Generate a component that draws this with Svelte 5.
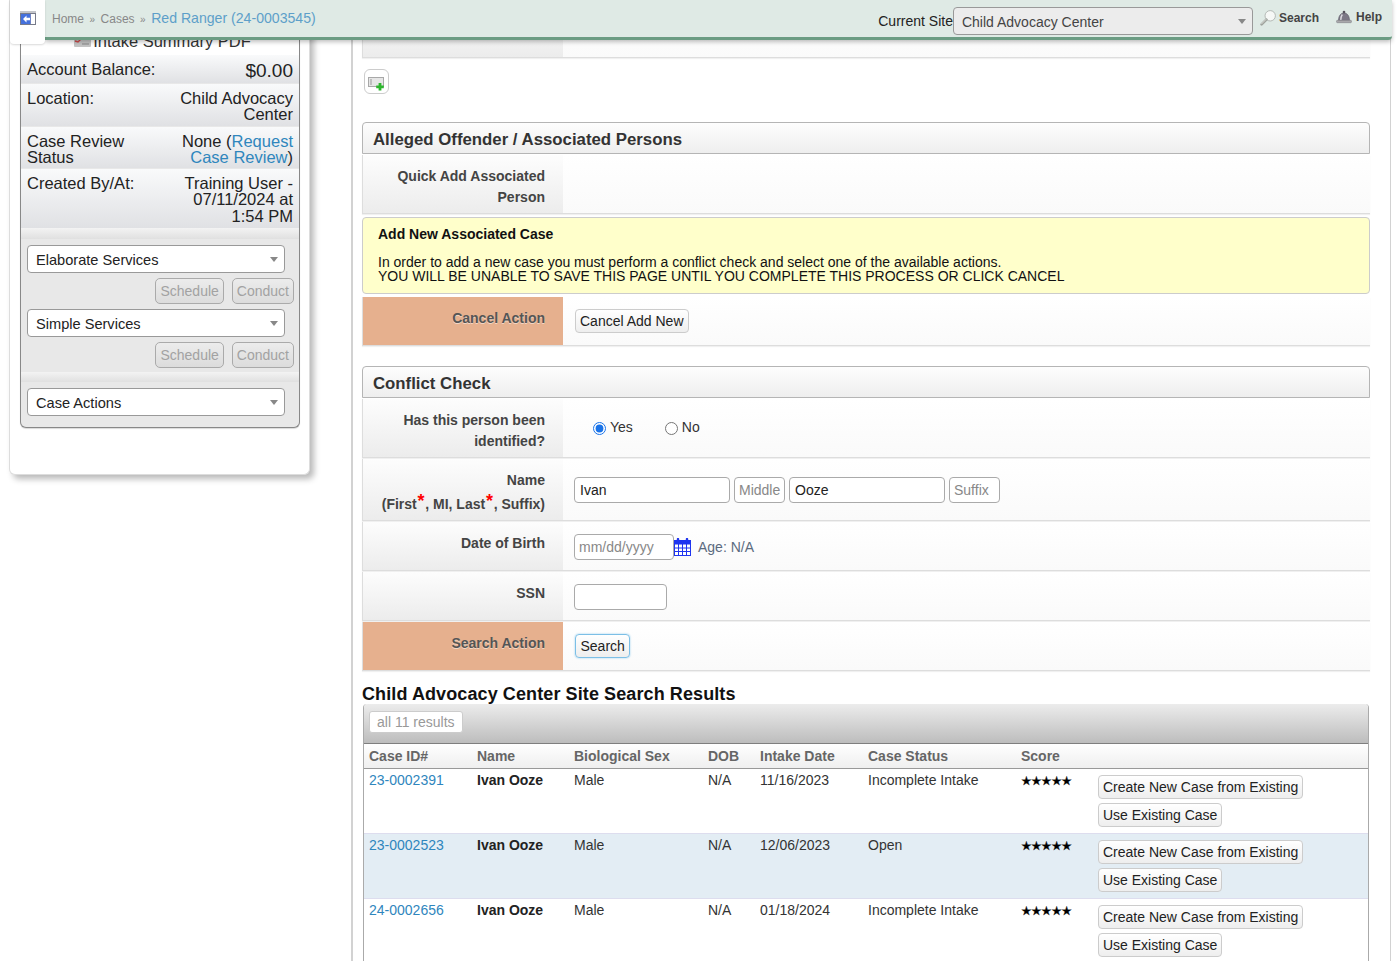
<script>
  const results = [
    { id: '23-0002391', date: '11/16/2023', status: 'Incomplete Intake', alt: false },
    { id: '23-0002523', date: '12/06/2023', status: 'Open', alt: true },
    { id: '24-0002656', date: '01/18/2024', status: 'Incomplete Intake', alt: false }
  ];
  const cols = ['Case ID#', 'Name', 'Biological Sex', 'DOB', 'Intake Date', 'Case Status', 'Score', ''];
</script>

<div class="page">
  <header class="topbar">
    <div class="tab">
      <svg class="backicon" width="16" height="14" viewBox="0 0 16 14">
        <rect x="0" y="0" width="16" height="14" fill="#c4c6cb" />
        <rect x="0.5" y="2.5" width="15" height="11" fill="#fff" stroke="#777b8a" />
        <rect x="1" y="3" width="9" height="10" fill="#4470dc" />
        <path d="M3 8 L6.5 4.6 V6.8 H10.5 V9.2 H6.5 V11.4 Z" fill="#fff" />
        <path d="M10.5 3 V13" stroke="#6e84c8" />
      </svg>
    </div>
    <nav class="crumbs">
      <span>Home</span><i>»</i><span>Cases</span><i>»</i><a href="#top">Red Ranger (24-0003545)</a>
    </nav>
    <div class="tools">
      <span class="sitelabel">Current Site</span>
      <div class="selectwrap site">
        <select><option>Child Advocacy Center</option></select>
      </div>
      <span class="tool searchtool">
        <svg width="16" height="16" viewBox="0 0 16 16">
          <circle cx="10.2" cy="5.8" r="5.2" fill="#f6f8f6" stroke="#b4bab6" />
          <path d="M6.4 9.6 L1.6 14.4" stroke="#9fa39d" stroke-width="2.6" stroke-linecap="round" />
          <path d="M6 9.4 L1.6 13.8" stroke="#e8e8e4" stroke-width="0.8" stroke-linecap="round" />
        </svg>
        Search
      </span>
      <span class="tool helptool">
        <svg width="16" height="14" viewBox="0 0 16 14">
          <path d="M2.5 10.5 C2.5 5.5 5 3 8 3 C11 3 13.5 5.5 13.5 10.5 Z" fill="#7c7886" stroke="#5b5864" stroke-width="0.6" />
          <path d="M6.3 4.5 C5.2 6 4.8 8 4.8 10" stroke="#dcdbe0" stroke-width="1.4" fill="none" />
          <circle cx="8" cy="2" r="1.3" fill="#55525c" />
          <rect x="0.5" y="10.3" width="15" height="2.4" rx="1" fill="#a9a8ab" stroke="#77757c" stroke-width="0.5" />
        </svg>
        Help
      </span>
    </div>
  </header>

  <aside class="side">
    <div class="card">
      <div class="panel">
        <div class="pdfrow">
          <svg width="17" height="10" viewBox="0 0 17 10">
            <rect width="17" height="10" rx="1" fill="#c4c4c4" />
            <path d="M1 4 L4 5 L8 1" stroke="#d04a4a" stroke-width="1.4" fill="none" />
            <path d="M8 7 H15" stroke="#888" />
          </svg>
          <span>Intake Summary PDF</span>
        </div>
        <div class="info bal"><span>Account Balance:</span><b>$0.00</b></div>
        <div class="info loc"><span>Location:</span><b>Child Advocacy Center</b></div>
        <div class="info rev">
          <span>Case Review Status</span>
          <b>None (<a href="#top">Request Case Review</a>)</b>
        </div>
        <div class="info cre">
          <span>Created By/At:</span>
          <b>Training User - 07/11/2024 at 1:54 PM</b>
        </div>
        <div class="divider first"></div>
        <div class="services">
          <div class="selectwrap svc"><select><option>Elaborate Services</option></select></div>
          <div class="acts"><button disabled>Schedule</button><button disabled>Conduct</button></div>
          <div class="selectwrap svc"><select><option>Simple Services</option></select></div>
          <div class="acts"><button disabled>Schedule</button><button disabled>Conduct</button></div>
        </div>
        <div class="divider"></div>
        <div class="services last">
          <div class="selectwrap svc"><select><option>Case Actions</option></select></div>
        </div>
      </div>
    </div>
  </aside>

  <main class="main">
    <div class="row toprow"><div class="lab"></div><div class="val"></div></div>
    <button class="addbtn" aria-label="Add">
      <svg width="17" height="14" viewBox="0 0 17 14">
        <rect x="0.5" y="0.5" width="15" height="9" fill="#e6e6e6" stroke="#a8a8a8" />
        <path d="M2 3 H4 M2 5 H4 M2 7 H4" stroke="#999" />
        <path d="M12 6 V13.5 M8.2 9.8 H15.8" stroke="#2db52d" stroke-width="2.8" />
      </svg>
    </button>

    <h2 class="sechead first">Alleged Offender / Associated Persons</h2>
    <div class="row quick"><div class="lab">Quick Add Associated Person</div><div class="val"></div></div>

    <div class="notice">
      <strong>Add New Associated Case</strong>
      <p>In order to add a new case you must perform a conflict check and select one of the available actions.<br />YOU WILL BE UNABLE TO SAVE THIS PAGE UNTIL YOU COMPLETE THIS PROCESS OR CLICK CANCEL</p>
    </div>

    <div class="row action cancel">
      <div class="lab">Cancel Action</div>
      <div class="val"><button class="btn">Cancel Add New</button></div>
    </div>

    <h2 class="sechead second">Conflict Check</h2>
    <div class="rows">
      <div class="row r-id">
        <div class="lab">Has this person been identified?</div>
        <div class="val radios">
          <label><input type="radio" name="ident" checked />Yes</label>
          <label><input type="radio" name="ident" />No</label>
        </div>
      </div>
      <div class="row r-name">
        <div class="lab">Name<br />(First<em>*</em>, MI, Last<em>*</em>, Suffix)</div>
        <div class="val names">
          <input class="wide" value="Ivan" />
          <input class="small" placeholder="Middle" />
          <input class="wide" value="Ooze" />
          <input class="small" placeholder="Suffix" />
        </div>
      </div>
      <div class="row r-dob">
        <div class="lab">Date of Birth</div>
        <div class="val dob">
          <input class="date" placeholder="mm/dd/yyyy" />
          <svg width="17" height="18" viewBox="0 0 17 18">
            <rect x="0.5" y="2.5" width="16" height="15" fill="#fff" stroke="#1f35f0" />
            <rect x="0.5" y="2.5" width="16" height="4" fill="#1f35f0" />
            <path d="M4 1 V4 M13 1 V4" stroke="#1f35f0" stroke-width="2.4" stroke-linecap="round" />
            <path d="M4.5 6 V17 M8.5 6 V17 M12.5 6 V17 M1 10 H16 M1 13.5 H16" stroke="#1f35f0" stroke-width="1" />
          </svg>
          <span class="age">Age: N/A</span>
        </div>
      </div>
      <div class="row r-ssn">
        <div class="lab">SSN</div>
        <div class="val"><input class="ssn" /></div>
      </div>
      <div class="row action r-search">
        <div class="lab">Search Action</div>
        <div class="val"><button class="btn focus">Search</button></div>
      </div>
    </div>

    <h3 class="reshead">Child Advocacy Center Site Search Results</h3>
    <div class="results">
      <div class="toolbar"><span class="count">all 11 results</span></div>
      <table>
        <thead>
          <tr>{#each cols as c}<th>{c}</th>{/each}</tr>
        </thead>
        <tbody>
          {#each results as r}
            <tr class:alt={r.alt}>
              <td><a href="#top">{r.id}</a></td>
              <td><b>Ivan Ooze</b></td>
              <td>Male</td>
              <td>N/A</td>
              <td>{r.date}</td>
              <td>{r.status}</td>
              <td class="stars"><span>★★★★★</span></td>
              <td class="btns">
                <button class="btn">Create New Case from Existing</button>
                <button class="btn">Use Existing Case</button>
              </td>
            </tr>
          {/each}
        </tbody>
      </table>
    </div>
  </main>
</div>

<style>
  :global(body) {
    margin: 0;
    background: #fff;
    overflow: hidden;
  }
  .page {
    position: relative;
    display: flex;
    width: 1399px;
    height: 961px;
    overflow: hidden;
    background: #fff;
    font-family: "Liberation Sans", Arial, sans-serif;
    font-size: 14px;
    color: #222;
  }
  a { color: #2f86bd; text-decoration: none; }

  /* header */
  .topbar {
    position: absolute;
    z-index: 5;
    top: 0;
    left: 45px;
    width: 1347px;
    height: 37px;
    display: flex;
    justify-content: space-between;
    background: #dfeae5;
    border-bottom: 3px solid #6b9c83;
    border-bottom-right-radius: 4px;
    box-shadow: 0 2px 4px rgba(0, 0, 0, .25);
  }
  .tab {
    position: absolute;
    left: -35px;
    top: 0;
    width: 35px;
    height: 44px;
    box-sizing: border-box;
    padding: 11px 0 0 10px;
    background: #fff;
    border-bottom-left-radius: 4px;
    border-bottom-right-radius: 4px;
    box-shadow: 0 1px 2px rgba(0, 0, 0, .15);
  }
  .backicon { display: block; }
  .crumbs {
    display: flex;
    align-items: baseline;
    padding: 10px 0 0 7px;
    font-size: 12px;
    color: #888;
  }
  .crumbs i { font-style: normal; font-size: 10px; margin: 0 5.5px; }
  .crumbs a { font-size: 14.1px; color: #5d9fc9; }
  .tools { display: flex; align-items: flex-start; padding: 7px 0 0; }
  .sitelabel { font-size: 14px; color: #222; padding-top: 6px; }
  .tool {
    display: flex;
    align-items: center;
    gap: 3px;
    font-size: 12px;
    font-weight: bold;
    color: #444;
    padding-top: 3px;
  }
  .searchtool { margin-left: 7px; }
  .helptool { margin: 0 10px 0 17px; gap: 4px; }

  /* selects */
  .selectwrap { position: relative; }
  .selectwrap::after {
    content: "";
    position: absolute;
    right: 7px;
    top: 50%;
    margin-top: -2px;
    border: 4px solid transparent;
    border-top: 5px solid #888;
    border-bottom: 0;
  }
  select {
    appearance: none;
    display: block;
    width: 100%;
    height: 28px;
    box-sizing: border-box;
    padding: 1px 8px 0;
    border: 1px solid #999;
    border-radius: 4px;
    background: #fff;
    font: 14px "Liberation Sans", Arial, sans-serif;
    color: #222;
  }
  .site { width: 300px; }
  .site select { background: #ececec; padding-top: 2px; color: #444; }

  /* sidebar */
  .side { width: 351px; flex: none; padding-left: 9px; box-sizing: border-box; }
  .card {
    width: 301px;
    height: 475px;
    box-sizing: border-box;
    padding: 0 10px;
    background: #fff;
    border-bottom-left-radius: 6px;
    border-bottom-right-radius: 6px;
    border: 1px solid #ddd;
    border-top: 0;
    box-shadow: 4px 4px 6px rgba(0, 0, 0, .28);
  }
  .panel {
    width: 280px;
    height: 428px;
    box-sizing: border-box;
    border: 1px solid #888;
    border-top: 0;
    border-radius: 0 0 6px 6px;
    background: #e8e8e8;
    display: flex;
    flex-direction: column;
    overflow: hidden;
    box-shadow: 0 1px 1px rgba(0,0,0,.15);
  }
  .pdfrow {
    display: flex;
    justify-content: center;
    align-items: baseline;
    gap: 2px;
    height: 55px;
    flex: none;
    box-sizing: border-box;
    padding: 33px 0 0 5px;
    background: #fff;
    font-size: 16.5px;
    line-height: 17px;
    color: #333;
  }
  .info {
    display: flex;
    justify-content: space-between;
    flex: none;
    box-sizing: border-box;
    padding: 6px 6px 0;
    margin-bottom: 1px;
    background: linear-gradient(#f9fafb, #e0e1e4);
    font-size: 16.5px;
    line-height: 16.4px;
    color: #222;
  }
  .info span { width: 118px; flex: none; }
  .info b { font-weight: normal; text-align: right; width: 116px; flex: none; }
  .bal { height: 28px; }
  .bal span { width: 170px; white-space: nowrap; }
  .bal b { font-size: 19px; line-height: 19px; width: auto; }
  .loc { height: 42px; }
  .rev { height: 41px; }
  .cre { height: 59px; margin-bottom: 0; }
  .divider {
    height: 10px;
    flex: none;
    background: linear-gradient(#f3f3f3, #e0e0e0);
  }
  .divider.first { height: 11px; }
  .services {
    flex: none;
    padding: 6px 6px 0;
    box-sizing: border-box;
    height: 133px;
  }
  .services.last { height: auto; }
  .svc { width: 258px; }
  .svc select { font-size: 14.6px; }
  .acts {
    display: flex;
    justify-content: flex-end;
    gap: 8px;
    height: 36px;
    padding-top: 5px;
    margin-right: -1px;
    box-sizing: border-box;
  }
  .acts button {
    height: 26px;
    padding: 0 4px;
    border: 1px solid #aaa;
    border-radius: 5px;
    background: linear-gradient(#ececec, #dcdcdc);
    font: 14px "Liberation Sans", Arial, sans-serif;
    color: #a2a2a2;
  }

  /* main */
  .main {
    width: 1040px;
    height: 961px;
    flex: none;
    box-sizing: border-box;
    padding: 0 19px 0 9px;
    border-left: 2px solid #d2d2d2;
    border-right: 1px solid #d2d2d2;
    background: #fff;
    overflow: hidden;
  }
  .row {
    display: grid;
    grid-template-columns: 200px 1fr;
    width: 1008px;
    box-sizing: border-box;
    border-left: 1px solid #ddd;
    border-bottom: 1px solid #ddd;
    box-shadow: 0 1px 1px rgba(0, 0, 0, .06);
  }
  .lab {
    box-sizing: border-box;
    padding: 11px 18px 0 10px;
    background: linear-gradient(#fdfdfd, #ececec);
    text-align: right;
    font-weight: bold;
    font-size: 14px;
    line-height: 21px;
    color: #444;
  }
  .val {
    box-sizing: border-box;
    padding-left: 11px;
    background: linear-gradient(#fff, #fafafa);
  }
  .toprow { height: 58px; }
  .addbtn {
    display: block;
    width: 25px;
    height: 25px;
    margin: 11px 0 28px 2px;
    padding: 5px 0 0 3px;
    border: 1px solid #ccc;
    border-radius: 6px;
    background: #fff;
  }
  .addbtn svg { display: block; }
  .sechead {
    width: 1008px;
    height: 32px;
    box-sizing: border-box;
    margin: 0;
    padding: 0 10px;
    border: 1px solid #b5b5b5;
    border-radius: 4px 4px 0 0;
    background: linear-gradient(#fdfdfd, #eeeeee);
    font-size: 16.8px;
    line-height: 34px;
    font-weight: bold;
    color: #333;
  }
  .quick { height: 59px; margin-top: 1px; }
  .notice {
    box-sizing: border-box;
    width: 1008px;
    height: 77px;
    margin-top: 3px;
    padding: 8px 15px 0;
    background: #ffffcb;
    border: 1px solid #ccc;
    border-radius: 4px;
    line-height: 14px;
    color: #111;
  }
  .notice strong { display: block; line-height: 16px; }
  .notice p { margin: 13px 0 0; }
  .action .lab {
    background: #e6b08e;
    text-shadow: 0 1px 0 rgba(255, 255, 255, .5);
    color: #555;
  }
  .action .val { display: flex; align-items: center; }
  .cancel { height: 49px; margin-top: 3px; }
  .second { margin-top: 20px; }
  .rows { display: flex; flex-direction: column; gap: 1px; margin-top: 1px; }
  .r-id { height: 59px; }
  .r-name { height: 62px; }
  .r-dob { height: 49px; }
  .r-ssn { height: 49px; }
  .r-search { height: 49px; }
  .r-name .lab { padding-top: 9px; line-height: 24px; }
  .r-name em { font-style: normal; color: #f00; font-size: 18px; line-height: 10px; vertical-align: 2px; margin: 0 .75px; }

  .radios { display: flex; align-items: center; padding-left: 30px; gap: 32px; padding-bottom: 2px; }
  .radios label { display: flex; align-items: center; gap: 4px; color: #333; }
  .radios input { margin: 0; width: 13px; height: 13px; accent-color: #1a73e8; position: relative; top: 1px; }

  input:not([type]) {
    box-sizing: border-box;
    height: 26px;
    margin: 0;
    padding: 0 5px;
    border: 1px solid #aaa;
    border-radius: 4px;
    background: #fff;
    font: 14px "Liberation Sans", Arial, sans-serif;
    color: #222;
  }
  input::placeholder { color: #888; opacity: 1; }
  .names { display: flex; align-items: center; gap: 4px; padding-top: 1px; }
  .wide { width: 156px; }
  input.small { width: 51px; padding: 0 0 0 4px; }
  .dob { display: flex; align-items: center; padding-top: 2px; }
  input.date { width: 100px; padding-left: 4px; }
  .age { margin-left: 7px; color: #5b6b7f; }
  .r-ssn .val { display: flex; align-items: center; padding-top: 2px; }
  .ssn { width: 93px; }

  .btn {
    height: 24px;
    padding: 0 4px;
    border: 1px solid #ccc;
    border-radius: 4px;
    background: linear-gradient(#fff, #eee);
    font: 14px "Liberation Sans", Arial, sans-serif;
    color: #222;
  }
  .action .btn { margin-left: 1px; }
  .btn.focus { padding: 0 4.5px; border-color: #7cbfe6; box-shadow: 0 0 2px #8cc9ec; }

  .reshead {
    margin: 14px 0 0;
    font-size: 18px;
    line-height: 18px;
    letter-spacing: .1px;
    font-weight: bold;
    color: #111;
  }
  .results {
    width: 1006px;
    margin: 1px 0 0 1px;
    box-sizing: border-box;
    border-left: 1px solid #aaa;
    border-right: 1px solid #aaa;
    border-top-left-radius: 4px;
    border-top-right-radius: 4px;
  }
  .toolbar {
    height: 40px;
    box-sizing: border-box;
    padding: 7px 0 0 5px;
    background: linear-gradient(#ececec, #bdbdbd);
    border-bottom: 1px solid #7f7f7f;
    border-top-left-radius: 4px;
    border-top-right-radius: 4px;
  }
  .count {
    display: inline-block;
    height: 22px;
    box-sizing: border-box;
    padding: 0 7px;
    border: 1px solid #ccc;
    border-radius: 3px;
    background: #fff;
    line-height: 20px;
    color: #999;
  }
  table {
    width: 100%;
    border-collapse: collapse;
    table-layout: fixed;
  }
  th {
    height: 24px;
    padding: 0 0 0 5px;
    box-sizing: border-box;
    background: linear-gradient(#fff, #efefef);
    border-bottom: 1px solid #999;
    text-align: left;
    font-size: 14px;
    color: #666;
  }
  th:nth-child(1) { width: 108px; }
  th:nth-child(2) { width: 97px; }
  th:nth-child(3) { width: 134px; }
  th:nth-child(4) { width: 52px; }
  th:nth-child(5) { width: 108px; }
  th:nth-child(6) { width: 153px; }
  th:nth-child(7) { width: 77px; }
  td {
    height: 65px;
    padding: 3px 0 0 5px;
    box-sizing: border-box;
    vertical-align: top;
    border-bottom: 1px solid #dde;
    line-height: 16px;
    color: #333;
  }
  .alt td { background: #e3edf4; }
  td b { color: #222; }
  .stars { padding-top: 4px; font-size: 12px; letter-spacing: -0.7px; color: #000; font-family: "DejaVu Sans", sans-serif; }
  .stars span { -webkit-text-stroke: .3px #000; }
  .btns { padding-top: 6px; }
  .btns .btn { display: block; }
  .btns .btn + .btn { margin-top: 4px; }
</style>
